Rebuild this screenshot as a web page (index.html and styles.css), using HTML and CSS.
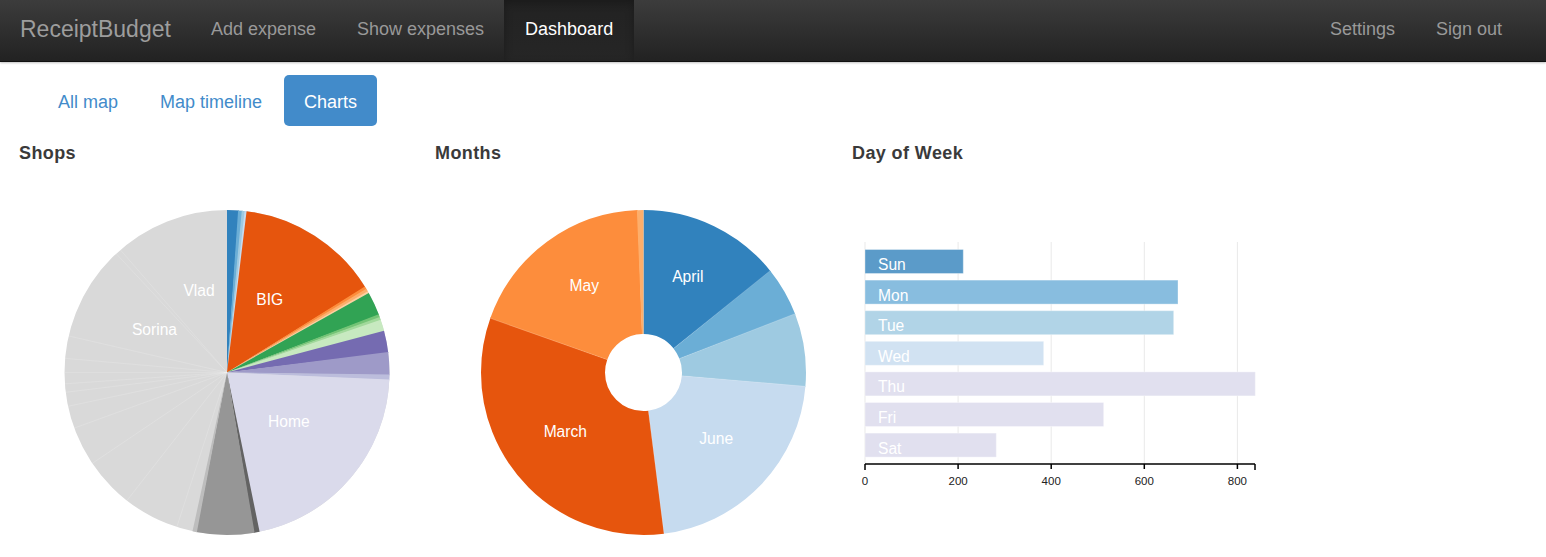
FILE: index.html
```html
<!DOCTYPE html>
<html lang="en">
<head>
<meta charset="utf-8">
<title>ReceiptBudget - Dashboard</title>
<link rel="stylesheet" href="styles.css">
</head>
<body>
<header class="navbar">
  <a class="brand" href="#">ReceiptBudget</a>
  <ul class="nav">
    <li><a href="#">Add expense</a></li>
    <li><a href="#">Show expenses</a></li>
    <li class="active"><a href="#">Dashboard</a></li>
  </ul>
  <ul class="nav nav-right">
    <li><a href="#">Settings</a></li>
    <li><a href="#">Sign out</a></li>
  </ul>
</header>

<ul class="pills">
  <li><a href="#">All map</a></li>
  <li><a href="#">Map timeline</a></li>
  <li class="active"><a href="#">Charts</a></li>
</ul>

<main class="charts">
  <section class="chart">
    <h2>Shops</h2>
    <svg class="pie" width="416" height="390" viewBox="0 0 416 390">
      <g transform="rotate(-90 208 209.5)">
        <circle class="slice full c-d9" cx="208" cy="209.5" r="81.25"/>
        <circle class="slice c-3182" cx="208" cy="209.5" r="81.25" pathLength="360" stroke-dasharray="4.3 360" stroke-dashoffset="0"/>
        <circle class="slice c-6bae" cx="208" cy="209.5" r="81.25" pathLength="360" stroke-dasharray="1.6 360" stroke-dashoffset="-4"/>
        <circle class="slice c-9eca" cx="208" cy="209.5" r="81.25" pathLength="360" stroke-dasharray="1.3 360" stroke-dashoffset="-5.3"/>
        <circle class="slice c-c6db" cx="208" cy="209.5" r="81.25" pathLength="360" stroke-dasharray="1 360" stroke-dashoffset="-6.3"/>
        <circle class="slice c-e655" cx="208" cy="209.5" r="81.25" pathLength="360" stroke-dasharray="51.3 360" stroke-dashoffset="-7"/>
        <circle class="slice c-fd8d" cx="208" cy="209.5" r="81.25" pathLength="360" stroke-dasharray="1.3 360" stroke-dashoffset="-58"/>
        <circle class="slice c-fdae" cx="208" cy="209.5" r="81.25" pathLength="360" stroke-dasharray="1.3 360" stroke-dashoffset="-59"/>
        <circle class="slice c-fdd0" cx="208" cy="209.5" r="81.25" pathLength="360" stroke-dasharray="1 360" stroke-dashoffset="-60"/>
        <circle class="slice c-31a3" cx="208" cy="209.5" r="81.25" pathLength="360" stroke-dasharray="8.6 360" stroke-dashoffset="-60.7"/>
        <circle class="slice c-74c4" cx="208" cy="209.5" r="81.25" pathLength="360" stroke-dasharray="1.3 360" stroke-dashoffset="-69"/>
        <circle class="slice c-a1d9" cx="208" cy="209.5" r="81.25" pathLength="360" stroke-dasharray="1.3 360" stroke-dashoffset="-70"/>
        <circle class="slice c-c7e9" cx="208" cy="209.5" r="81.25" pathLength="360" stroke-dasharray="4.3 360" stroke-dashoffset="-71"/>
        <circle class="slice c-756b" cx="208" cy="209.5" r="81.25" pathLength="360" stroke-dasharray="8 360" stroke-dashoffset="-75"/>
        <circle class="slice c-9e9a" cx="208" cy="209.5" r="81.25" pathLength="360" stroke-dasharray="8.3 360" stroke-dashoffset="-82.7"/>
        <circle class="slice c-bcbd" cx="208" cy="209.5" r="81.25" pathLength="360" stroke-dasharray="2.1 360" stroke-dashoffset="-90.7"/>
        <circle class="slice c-dada" cx="208" cy="209.5" r="81.25" pathLength="360" stroke-dasharray="76.2 360" stroke-dashoffset="-92.5"/>
        <circle class="slice c-6363" cx="208" cy="209.5" r="81.25" pathLength="360" stroke-dasharray="2.1 360" stroke-dashoffset="-168.4"/>
        <circle class="slice c-9696" cx="208" cy="209.5" r="81.25" pathLength="360" stroke-dasharray="20.8 360" stroke-dashoffset="-170.2"/>
        <circle class="slice c-bdbd" cx="208" cy="209.5" r="81.25" pathLength="360" stroke-dasharray="1.6 360" stroke-dashoffset="-190.7"/>
      </g>
      <g class="seps">
        <line x1="208" y1="209.5" x2="208" y2="47" transform="rotate(198 208 209.5)"/>
        <line x1="208" y1="209.5" x2="208" y2="47" transform="rotate(218 208 209.5)"/>
        <line x1="208" y1="209.5" x2="208" y2="47" transform="rotate(236 208 209.5)"/>
        <line x1="208" y1="209.5" x2="208" y2="47" transform="rotate(250 208 209.5)"/>
        <line x1="208" y1="209.5" x2="208" y2="47" transform="rotate(258 208 209.5)"/>
        <line x1="208" y1="209.5" x2="208" y2="47" transform="rotate(263 208 209.5)"/>
        <line x1="208" y1="209.5" x2="208" y2="47" transform="rotate(266 208 209.5)"/>
        <line x1="208" y1="209.5" x2="208" y2="47" transform="rotate(270 208 209.5)"/>
        <line x1="208" y1="209.5" x2="208" y2="47" transform="rotate(275 208 209.5)"/>
        <line x1="208" y1="209.5" x2="208" y2="47" transform="rotate(283 208 209.5)"/>
        <line x1="208" y1="209.5" x2="208" y2="47" transform="rotate(317 208 209.5)"/>
        <line x1="208" y1="209.5" x2="208" y2="47" transform="rotate(319 208 209.5)"/>
      </g>
      <g class="pie-label">
        <text x="180" y="133.3">Vlad</text>
        <text x="135.5" y="172">Sorina</text>
        <text x="250.7" y="142">BIG</text>
        <text x="269.8" y="263.7">Home</text>
      </g>
    </svg>
  </section>

  <section class="chart">
    <h2>Months</h2>
    <svg class="pie" width="417" height="390" viewBox="0 0 417 390">
      <g transform="rotate(-90 208.5 209.5)">
        <circle class="ring c-3182" cx="208.5" cy="209.5" r="100.5" pathLength="360" stroke-dasharray="51.5 360" stroke-dashoffset="0"/>
        <circle class="ring c-6bae" cx="208.5" cy="209.5" r="100.5" pathLength="360" stroke-dasharray="17.9 360" stroke-dashoffset="-51.2"/>
        <circle class="ring c-9eca" cx="208.5" cy="209.5" r="100.5" pathLength="360" stroke-dasharray="26.4 360" stroke-dashoffset="-68.8"/>
        <circle class="ring c-c6db" cx="208.5" cy="209.5" r="100.5" pathLength="360" stroke-dasharray="78.1 360" stroke-dashoffset="-94.9"/>
        <circle class="ring c-e655" cx="208.5" cy="209.5" r="100.5" pathLength="360" stroke-dasharray="117.1 360" stroke-dashoffset="-172.7"/>
        <circle class="ring c-fd8d" cx="208.5" cy="209.5" r="100.5" pathLength="360" stroke-dasharray="68.4 360" stroke-dashoffset="-289.5"/>
        <circle class="ring c-fdae" cx="208.5" cy="209.5" r="100.5" pathLength="360" stroke-dasharray="2.4 360" stroke-dashoffset="-357.6"/>
      </g>
      <g class="seps ring-seps">
        <line x1="208.5" y1="171" x2="208.5" y2="47" transform="rotate(51.2 208.5 209.5)"/>
        <line x1="208.5" y1="171" x2="208.5" y2="47" transform="rotate(68.8 208.5 209.5)"/>
        <line x1="208.5" y1="171" x2="208.5" y2="47" transform="rotate(94.9 208.5 209.5)"/>
        <line x1="208.5" y1="171" x2="208.5" y2="47" transform="rotate(172.7 208.5 209.5)"/>
        <line x1="208.5" y1="171" x2="208.5" y2="47" transform="rotate(289.5 208.5 209.5)"/>
      </g>
      <g class="pie-label">
        <text x="252.8" y="119.3">April</text>
        <text x="149.3" y="128.3">May</text>
        <text x="130.3" y="273.7">March</text>
        <text x="281.2" y="280.7">June</text>
      </g>
    </svg>
  </section>

  <section class="chart">
    <h2>Day of Week</h2>
    <svg class="bars" width="430" height="390" viewBox="0 0 430 390">
      <g class="grid">
        <line x1="13" y1="79" x2="13" y2="301"/>
        <line x1="106.1" y1="79" x2="106.1" y2="301"/>
        <line x1="199.2" y1="79" x2="199.2" y2="301"/>
        <line x1="292.3" y1="79" x2="292.3" y2="301"/>
        <line x1="385.4" y1="79" x2="385.4" y2="301"/>
      </g>
      <g>
        <rect class="bar b-sun" x="13" y="86.5" width="98.3" height="24"/>
        <rect class="bar b-mon" x="13" y="117.1" width="313" height="24"/>
        <rect class="bar b-tue" x="13" y="147.7" width="308.7" height="24"/>
        <rect class="bar b-wed" x="13" y="178.3" width="178.7" height="24"/>
        <rect class="bar b-rest" x="13" y="208.9" width="390.3" height="24"/>
        <rect class="bar b-rest" x="13" y="239.5" width="238.7" height="24"/>
        <rect class="bar b-rest" x="13" y="270.1" width="131.3" height="24"/>
      </g>
      <g class="bar-label">
        <text x="26" y="107">Sun</text>
        <text x="26" y="137.6">Mon</text>
        <text x="26" y="168.2">Tue</text>
        <text x="26" y="198.8">Wed</text>
        <text x="26" y="229.4">Thu</text>
        <text x="26" y="260">Fri</text>
        <text x="26" y="290.6">Sat</text>
      </g>
      <g class="axis">
        <line x1="13" y1="301" x2="403" y2="301"/>
        <line x1="13" y1="301" x2="13" y2="307"/>
        <line x1="106.1" y1="301" x2="106.1" y2="306"/>
        <line x1="199.2" y1="301" x2="199.2" y2="306"/>
        <line x1="292.3" y1="301" x2="292.3" y2="306"/>
        <line x1="385.4" y1="301" x2="385.4" y2="306"/>
        <line x1="403" y1="301" x2="403" y2="307"/>
      </g>
      <g class="tick-label">
        <text x="13" y="322">0</text>
        <text x="106.1" y="322">200</text>
        <text x="199.2" y="322">400</text>
        <text x="292.3" y="322">600</text>
        <text x="385.4" y="322">800</text>
      </g>
    </svg>
  </section>
</main>
</body>
</html>
```

FILE: styles.css
```css
* { box-sizing: border-box; }

html, body {
  margin: 0;
  padding: 0;
  background: #fff;
  font-family: "Liberation Sans", Arial, Helvetica, sans-serif;
  color: #333;
}

a { text-decoration: none; }

ul { list-style: none; margin: 0; padding: 0; }

/* ---------- Navbar ---------- */
.navbar {
  display: flex;
  align-items: stretch;
  height: 62px;
  padding-right: 24px;
  background: linear-gradient(to bottom, #3c3c3c 0%, #222 100%);
  border-bottom: 1px solid #111;
  box-shadow: 0 1px 2px rgba(0, 0, 0, 0.25);
}

.brand {
  display: block;
  padding: 0 19px 0 20px;
  font-size: 23px;
  line-height: 58px;
  color: #9d9d9d;
}

.nav {
  display: flex;
}

.nav-right {
  margin-left: auto;
}

.nav a {
  display: block;
  padding: 0 20px 0 21px;
  font-size: 18px;
  line-height: 58px;
  height: 61px;
  color: #999;
}

.nav .active a {
  padding: 0 21px 0 21px;
  color: #fff;
  background: linear-gradient(to bottom, #222 0%, #262626 100%);
  box-shadow: inset 0 3px 9px rgba(0, 0, 0, 0.25);
}

/* ---------- Pills ---------- */
.pills {
  display: flex;
  margin-top: 13px;
  padding-left: 38px;
}

.pills li + li { margin-left: 2px; }

.pills a {
  display: block;
  padding: 16px 20px 12px;
  font-size: 18px;
  line-height: 23px;
  color: #428bca;
  border-radius: 5px;
}

.pills .active a {
  color: #fff;
  background: #428bca;
}

/* ---------- Charts ---------- */
.charts {
  display: grid;
  grid-template-columns: 416px 417px 1fr;
  padding-left: 19px;
  margin-top: 15px;
}

.chart h2 {
  margin: 0;
  padding-top: 1px;
  height: 22px;
  font-size: 18px;
  line-height: 22px;
  font-weight: bold;
  color: #3a3a3a;
  letter-spacing: 0.4px;
}

.chart svg { display: block; }

.slice {
  fill: none;
  stroke-width: 162.5;
}

.ring {
  fill: none;
  stroke-width: 124;
}

.full { stroke: #d9d9d9; }

.c-3182 { stroke: #3182bd; }
.c-6bae { stroke: #6baed6; }
.c-9eca { stroke: #9ecae1; }
.c-c6db { stroke: #c6dbef; }
.c-e655 { stroke: #e6550d; }
.c-fd8d { stroke: #fd8d3c; }
.c-fdae { stroke: #fdae6b; }
.c-fdd0 { stroke: #fdd0a2; }
.c-31a3 { stroke: #31a354; }
.c-74c4 { stroke: #74c476; }
.c-a1d9 { stroke: #a1d99b; }
.c-c7e9 { stroke: #c7e9c0; }
.c-756b { stroke: #756bb1; }
.c-9e9a { stroke: #9e9ac8; }
.c-bcbd { stroke: #bcbddc; }
.c-dada { stroke: #dadaeb; }
.c-6363 { stroke: #636363; }
.c-9696 { stroke: #969696; }
.c-bdbd { stroke: #bdbdbd; }
.c-d9 { stroke: #d9d9d9; }

.seps line {
  stroke: rgba(255, 255, 255, 0.25);
  stroke-width: 0.6;
}

.ring-seps line {
  stroke: rgba(255, 255, 255, 0.3);
}

.pie-label text,
.bar-label text {
  fill: #fff;
  font-family: "Liberation Sans", Arial, sans-serif;
  font-size: 15.6px;
}

.pie-label text { text-anchor: middle; }

.grid line {
  stroke: #e9e9e9;
  stroke-width: 1;
}

.bar { stroke: rgba(255, 255, 255, 0.35); stroke-width: 1; }
.b-sun { fill: #5b9bc9; }
.b-mon { fill: #88bddf; }
.b-tue { fill: #b1d4e7; }
.b-wed { fill: #d1e2f2; }
.b-rest { fill: #e1e0ef; }

.axis line {
  stroke: #000;
  stroke-width: 1.5;
}

.tick-label text {
  fill: #222;
  font-family: "Liberation Sans", Arial, sans-serif;
  font-size: 11.5px;
  text-anchor: middle;
}
```
